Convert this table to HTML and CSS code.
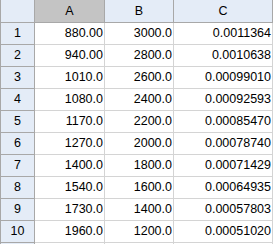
FILE: index.html
```html
<!DOCTYPE html>
<html>
<head>
<meta charset="utf-8">
<link rel="stylesheet" href="styles.css">
</head>
<body>
<div class="sheet">
  <div class="hd corner"></div>
  <div class="hd col sel">A</div>
  <div class="hd col">B</div>
  <div class="hd col">C</div>

  <div class="rh">1</div><div class="c">880.00</div><div class="c">3000.0</div><div class="c">0.0011364</div>
  <div class="rh">2</div><div class="c">940.00</div><div class="c">2800.0</div><div class="c">0.0010638</div>
  <div class="rh">3</div><div class="c">1010.0</div><div class="c">2600.0</div><div class="c">0.00099010</div>
  <div class="rh">4</div><div class="c">1080.0</div><div class="c">2400.0</div><div class="c">0.00092593</div>
  <div class="rh">5</div><div class="c">1170.0</div><div class="c">2200.0</div><div class="c">0.00085470</div>
  <div class="rh">6</div><div class="c">1270.0</div><div class="c">2000.0</div><div class="c">0.00078740</div>
  <div class="rh">7</div><div class="c">1400.0</div><div class="c">1800.0</div><div class="c">0.00071429</div>
  <div class="rh">8</div><div class="c">1540.0</div><div class="c">1600.0</div><div class="c">0.00064935</div>
  <div class="rh">9</div><div class="c">1730.0</div><div class="c">1400.0</div><div class="c">0.00057803</div>
  <div class="rh">10</div><div class="c">1960.0</div><div class="c">1200.0</div><div class="c">0.00051020</div>
  <div class="rh"></div><div class="c"></div><div class="c"></div><div class="c"></div>
</div>
</body>
</html>
```

FILE: styles.css
```css
html, body {
  margin: 0;
  padding: 0;
  background: #ffffff;
  overflow: hidden;
}
.sheet {
  display: grid;
  grid-template-columns: 35px 70px 69px 99px;
  grid-template-rows: 23px repeat(10, 22px) 2px;
  width: 274px;
  font-family: "Liberation Sans", Arial, sans-serif;
  font-size: 12.5px;
  color: #000;
}
.sheet > div {
  box-sizing: border-box;
  border-right: 1px solid #d4d4d4;
  border-bottom: 1px solid #d4d4d4;
  display: flex;
  align-items: center;
  line-height: 1;
}
.sheet > div:nth-last-child(-n+4) {
  border-bottom: 0;
}
.hd {
  background: #e4ecf7;
  border-right-color: #a8a8a8 !important;
  border-bottom-color: #a8a8a8 !important;
  justify-content: center;
}
.hd.sel {
  background: #c4c4c4;
}
.corner {
  border-left: 1px solid #a8a8a8;
}
.rh {
  background: #e4ecf7;
  border-left: 1px solid #a8a8a8;
  border-right-color: #a8a8a8 !important;
  border-bottom-color: #a8a8a8 !important;
  justify-content: center;
}
.c {
  justify-content: flex-end;
  padding-right: 1px;
}
```
